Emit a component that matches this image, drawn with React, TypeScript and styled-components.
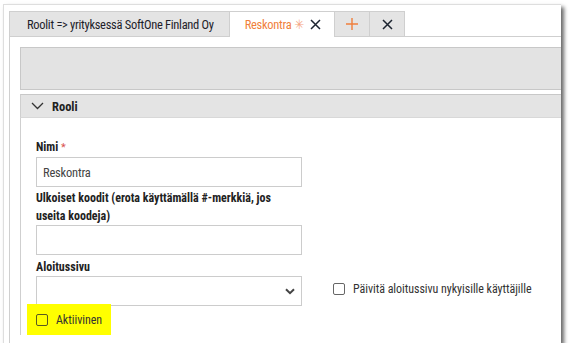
import React from 'react'
import styled, { createGlobalStyle } from 'styled-components'

const GlobalStyle = createGlobalStyle`
  body {
    margin: 0;
    background: #fff;
    font-family: "Roboto Condensed", "Liberation Sans Narrow", "DejaVu Sans Condensed", Roboto, sans-serif;
    color: #222;
  }
`

const tabs = [
  { label: 'Roolit => yrityksessä SoftOne Finland Oy' },
]

const App = () => {
  return (
    <>
      <GlobalStyle />
      <Window>
        <TabBar>
          {tabs.map((t) => (
            <Tab key={t.label}>
              <TabText>{t.label}</TabText>
            </Tab>
          ))}
          <Tab active>
            <TabText active>Reskontra</TabText>
            <Star>✳</Star>
            <CloseIcon />
          </Tab>
          <Tab small>
            <svg width="14" height="14" viewBox="0 0 14 14">
              <path d="M7 1v12M1 7h12" stroke="#f07f3c" strokeWidth="1.4" />
            </svg>
          </Tab>
          <Tab small>
            <CloseIcon />
          </Tab>
        </TabBar>
        <Pane>
          <Toolbar />
          <Section>
            <SectionHeader>
              <svg width="13" height="8" viewBox="0 0 13 8">
                <path d="M1 1l5.5 5.5L12 1" fill="none" stroke="#333" strokeWidth="1.3" />
              </svg>
              <SectionTitle>Rooli</SectionTitle>
            </SectionHeader>
            <SectionBody>
              <Field>
                <Label>
                  Nimi <Req>*</Req>
                </Label>
                <Input defaultValue="Reskontra" />
              </Field>
              <Field>
                <Label>Ulkoiset koodit (erota käyttämällä #-merkkiä, jos useita koodeja)</Label>
                <Input defaultValue="" />
              </Field>
              <Field gapTop={1}>
                <Label>Aloitussivu</Label>
                <SelectRow>
                  <Select>
                    <svg width="10" height="7" viewBox="0 0 10 7">
                      <path d="M1 1.2l4 4 4-4" fill="none" stroke="#444" strokeWidth="2" />
                    </svg>
                  </Select>
                  <CheckRow>
                    <Box />
                    <CheckText>Päivitä aloitussivu nykyisille käyttäjille</CheckText>
                  </CheckRow>
                </SelectRow>
              </Field>
              <Highlight>
                <Box dark />
                <CheckText>Aktiivinen</CheckText>
              </Highlight>
            </SectionBody>
          </Section>
        </Pane>
      </Window>
    </>
  )
}

const CloseIcon = () => (
  <svg width="11" height="11" viewBox="0 0 11 11">
    <path d="M1 1l9 9M10 1l-9 9" stroke="#1c2430" strokeWidth="1.5" />
  </svg>
)

export default App

const Window = styled.div`
  width: 558px;
  height: 339px;
  margin: 4px 0 0 3px;
  box-sizing: border-box;
  padding: 6px 0 0 5px;
  background: #fff;
  border-top: 1px solid #dedede;
  border-left: 1px solid #dedede;
  box-shadow: 3px 3px 4px rgba(0, 0, 0, 0.6);
  overflow: hidden;
`
const TabBar = styled.div`
  display: flex;
  width: 700px;
  height: 25px;
  border-bottom: 1px solid #cfcfcf;
`
const Tab = styled.div<{ active?: boolean; small?: boolean }>`
  height: ${(p) => (p.active ? '26px' : '25px')};
  box-sizing: border-box;
  display: flex;
  align-items: center;
  gap: 6px;
  justify-content: ${(p) => (p.small ? 'center' : 'flex-start')};
  width: ${(p) => (p.small ? '36px' : 'auto')};
  padding: ${(p) => (p.small ? '0' : p.active ? '0 13px 0 15px' : '0 15px 0 17px')};
  margin-left: -1px;
  background: ${(p) => (p.active ? '#fff' : '#e4e4e4')};
  border: 1px solid #cfcfcf;
  border-bottom: none;
  &:first-child {
    margin-left: 0;
  }
`
const TabText = styled.span<{ active?: boolean }>`
  font-size: 12.5px;
  letter-spacing: -0.3px;
  color: ${(p) => (p.active ? '#f07f3c' : '#1e1e2a')};
  white-space: nowrap;
`
const Star = styled.span`
  font-size: 13px;
  color: #f5a582;
  margin-left: -3px;
`
const Pane = styled.div`
  width: 700px;
  height: 320px;
  border-left: 1px solid #cfcfcf;
  padding: 10px 0 0 10px;
`
const Toolbar = styled.div`
  height: 43px;
  box-sizing: border-box;
  background: #e3e3e3;
  border: 1px solid #c8c8c8;
`
const Section = styled.div`
  margin-top: 4px;
  border-left: 1px solid #cfcfcf;
`
const SectionHeader = styled.div`
  height: 24px;
  box-sizing: border-box;
  display: flex;
  align-items: center;
  gap: 8px;
  padding-left: 10px;
  background: #e4e4e4;
  border-top: 1px solid #c8c8c8;
  border-bottom: 1px solid #d8d8d8;
  margin-left: -1px;
  border-left: 1px solid #cfcfcf;
`
const SectionTitle = styled.span`
  font-size: 12.5px;
  font-weight: 700;
  color: #222;
`
const SectionBody = styled.div`
  display: flex;
  flex-direction: column;
  gap: 2px;
  padding: 20px 0 0 15px;
`
const Field = styled.div<{ gapTop?: number }>`
  display: flex;
  flex-direction: column;
  margin-top: ${(p) => p.gapTop || 0}px;
`
const Label = styled.div`
  width: 266px;
  font-size: 12px;
  line-height: 18px;
  font-weight: 700;
  color: #222;
`
const Req = styled.span`
  color: #d9534f;
  font-weight: 400;
  font-size: 11px;
`
const Input = styled.input`
  width: 266px;
  height: 30px;
  box-sizing: border-box;
  border: 1px solid #cccccc;
  padding: 0 6px;
  font: inherit;
  font-size: 12.5px;
  letter-spacing: -0.2px;
  color: #444;
  outline: none;
`
const SelectRow = styled.div`
  display: flex;
  align-items: center;
  gap: 31px;
`
const Select = styled.div`
  width: 266px;
  height: 30px;
  box-sizing: border-box;
  border: 1px solid #cccccc;
  display: flex;
  align-items: center;
  justify-content: flex-end;
  padding-right: 6px;
`
const CheckRow = styled.div`
  display: flex;
  align-items: center;
  gap: 8px;
  margin-top: -4px;
`
const Box = styled.span<{ dark?: boolean }>`
  width: 12px;
  height: 12px;
  box-sizing: border-box;
  border: 1px solid ${(p) => (p.dark ? '#5a5a20' : '#666')};
  border-radius: 2px;
`
const CheckText = styled.span`
  font-size: 12px;
  letter-spacing: -0.05px;
  color: #333;
`
const Highlight = styled.div`
  display: flex;
  align-items: center;
  gap: 8px;
  width: 84px;
  height: 31px;
  box-sizing: border-box;
  padding-left: 9px;
  margin-left: -9px;
  margin-top: -4px;
  background: #ffff00;
`
